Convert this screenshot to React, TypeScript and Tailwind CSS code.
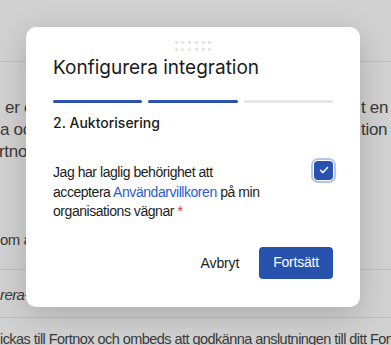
import React from "react";

const sans = { fontFamily: "'Liberation Sans', Arial, sans-serif" };
const inter = { fontFamily: "Inter, 'Liberation Sans', sans-serif" };

function Dots() {
  return (
    <div className="flex justify-center">
      <div className="grid grid-cols-6 gap-x-[3.7px] gap-y-[3.5px]">
        {Array.from({ length: 12 }).map((_, i) => (
          <span key={i} className="block h-[3px] w-[3px] rounded-full bg-[#e1e1e1]" />
        ))}
      </div>
    </div>
  );
}

export default function App() {
  return (
    <div
      className="relative h-[345px] w-[391px] overflow-hidden bg-[#d1d1d1] text-[#3a3a3a]"
      style={sans}
    >
      {/* background page */}
      <div className="h-[62px] border-b border-[#bdbdbd]" />
      <div className="pt-[35px] text-[17px] leading-[22px] tracking-[-0.3px]">
        <div className="flex justify-between whitespace-nowrap">
          <span className="pl-[5px]">er en</span>
          <span className="w-[30px] overflow-hidden">t en</span>
        </div>
        <div className="flex justify-between whitespace-nowrap">
          <span>a och</span>
          <span className="w-[30px] overflow-hidden">tion</span>
        </div>
        <div className="flex justify-start whitespace-nowrap">
          <span className="-ml-[1px]">rtnox</span>
        </div>
      </div>
      <div className="mt-[67px] text-[15px] leading-[20px] tracking-[-0.5px] whitespace-nowrap">
        om att
      </div>
      <div className="mt-[19px] flex h-[48px] items-center border-t border-[#bdbdbd] pt-[3px] text-[15px] leading-[20px] italic font-medium tracking-[-0.6px] whitespace-nowrap">
        rera-
      </div>
      <div className="border-t border-[#bdbdbd] pt-[11px] text-[14.5px] leading-[20px] tracking-[-0.55px] whitespace-nowrap">
        ickas till Fortnox och ombeds att godkänna anslutningen till ditt Fortnox
      </div>

      {/* modal */}
      <div className="absolute left-[26px] top-[27px] w-[334px] rounded-[10px] bg-white px-[27px] pt-[14px] pb-[28px] shadow-[0_8px_30px_rgba(0,0,0,0.18)]">
        <Dots />
        <h2
          className="mt-[3px] text-[19px] leading-[28px] font-normal text-[#1b1b1b]"
          style={inter}
        >
          Konfigurera integration
        </h2>
        <div className="mt-[18px] flex gap-[6px]">
          <div className="h-[3px] flex-1 rounded-full bg-[#2a52b0]" />
          <div className="h-[3px] flex-1 rounded-full bg-[#2a52b0]" />
          <div className="h-[3px] flex-1 rounded-full bg-[#e6e6e6]" />
        </div>
        <h3
          className="mt-[10px] text-[14px] leading-[20px] font-medium text-[#1b1b1b]"
          style={inter}
        >
          2. Auktorisering
        </h3>
        <div className="mt-[28px] flex items-start justify-between">
          <p className="mt-[2.5px] text-[14px] leading-[19.5px] tracking-[-0.45px] text-[#1c1c1c]">
            Jag har laglig behörighet att
            <br />
            acceptera <span className="text-[#2d5bcf]">Användarvillkoren</span> på min
            <br />
            organisations vägnar <span className="text-[#d9363e]">*</span>
          </p>
          <span className="flex h-[19px] w-[19px] items-center justify-center rounded-[4px] bg-[#2952ae] ring-2 ring-[#b3c4ef] ring-offset-1 ring-offset-white">
            <svg width="12" height="12" viewBox="0 0 12 12" fill="none">
              <path
                d="M2.5 6.3 L5 8.6 L9.5 3.6"
                stroke="white"
                strokeWidth="1.5"
                strokeLinecap="round"
                strokeLinejoin="round"
              />
            </svg>
          </span>
        </div>
        <div className="mt-[25px] flex items-center justify-end">
          <button className="mr-[20px] text-[14px] leading-[20px] tracking-[-0.15px] text-[#1c1c1c]">
            Avbryt
          </button>
          <button className="h-[32px] rounded-[4px] bg-[#2952ae] px-[14px] text-[14px] tracking-[-0.2px] text-white">
            Fortsätt
          </button>
        </div>
      </div>
    </div>
  );
}
